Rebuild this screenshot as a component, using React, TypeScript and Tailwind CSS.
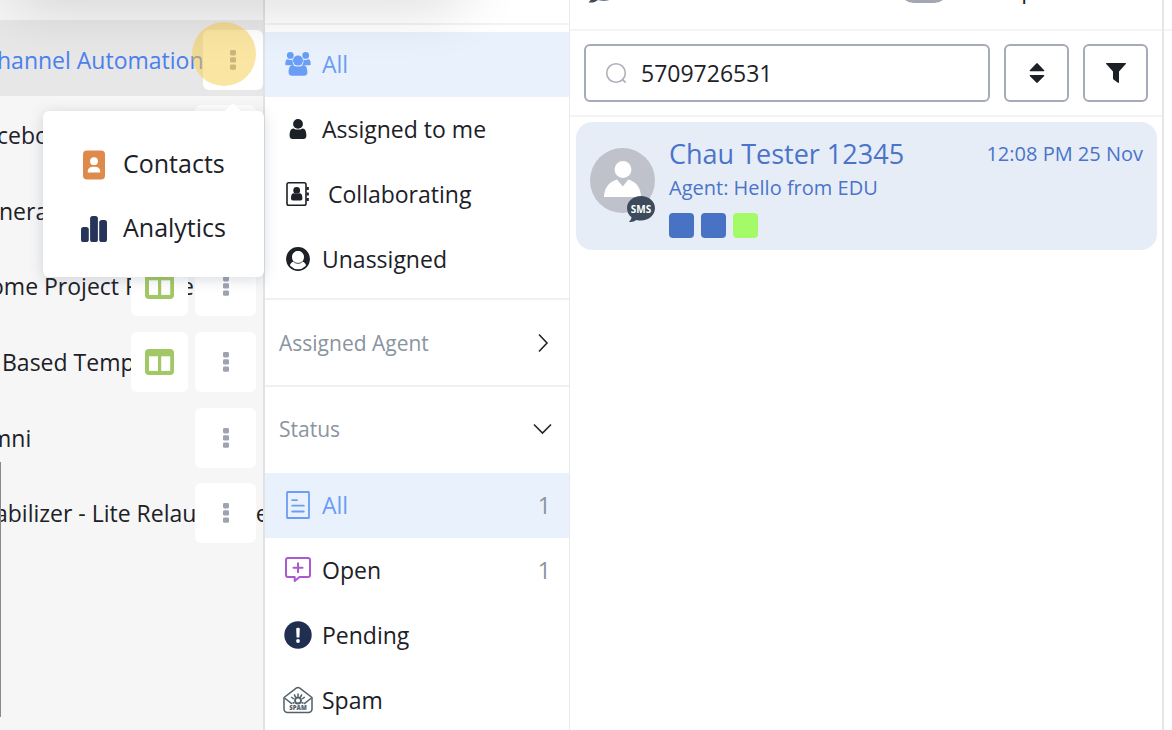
import type { ReactNode } from 'react';

type Channel = { name: string; indent: string; board?: boolean; active?: boolean };

const channels: Channel[] = [
  { name: 'hannel Automation', indent: '-ml-[3px]', active: true },
  { name: 'cebook', indent: '-ml-[3px]' },
  { name: 'neral', indent: '-ml-px' },
  { name: 'ome Project Phone', indent: '-ml-[10px]', board: true },
  { name: 'Based Template', indent: 'ml-[2px]', board: true },
  { name: 'mni', indent: '-ml-[10px]' },
  { name: 'abilizer - Lite Relaunch Re', indent: '-ml-[5px]' },
];

function KebabIcon() {
  return (
    <svg className="w-[6px] h-5" viewBox="0 0 6 20" fill="currentColor">
      <rect width="6" height="5.4" rx="1.4" />
      <rect y="7.2" width="6" height="5.4" rx="1.4" />
      <rect y="14.4" width="6" height="5.4" rx="1.4" />
    </svg>
  );
}

function BoardIcon() {
  return (
    <svg className="w-[29px] h-[26px]" viewBox="0 0 29 26">
      <rect width="29" height="26" rx="4" fill="#a2c765" />
      <rect x="4" y="7.3" width="9" height="14.6" fill="#fff" />
      <rect x="16.2" y="7.3" width="9" height="14.6" fill="#fff" />
    </svg>
  );
}

function ContactsIcon() {
  return (
    <svg className="w-[26px] h-[30px]" viewBox="0 0 26 30">
      <rect x="2" y="0.5" width="22" height="29" rx="4" fill="#dd8a4a" />
      <circle cx="13" cy="11.2" r="3.9" fill="#fff" />
      <path d="M6.8 22.4v-1.2c0-3 2.6-4.4 6.2-4.4s6.2 1.4 6.2 4.4v1.2z" fill="#fff" />
    </svg>
  );
}

function AnalyticsIcon() {
  return (
    <svg className="w-[26px] h-[26px]" viewBox="0 0 26 26" fill="#26345a">
      <rect x="0" y="11" width="7.8" height="15" rx="2.6" />
      <rect x="9.1" y="0" width="7.8" height="26" rx="2.6" />
      <rect x="18.2" y="4" width="7.8" height="22" rx="2.6" />
    </svg>
  );
}

function UsersIcon() {
  return (
    <svg className="w-[26px] h-6" viewBox="0 0 26 24" fill="currentColor">
      <circle cx="5.3" cy="3.4" r="3.4" />
      <circle cx="20.7" cy="3.4" r="3.4" />
      <path d="M0.300 12.500c0-3.500.9-5.200 2.300-5.200.8.500 1.700.8 2.700.8.900 0 1.700-.2 2.400-.6-.5 2.200 0 4.200 1.200 5.700H2.800C1 13.200.3 13.300.3 12.500z" />
      <path d="M25.700 12.500c0-3.500-.9-5.200-2.300-5.200-.8.500-1.700.8-2.700.8-.9 0-1.700-.2-2.400-.6.5 2.200 0 4.200-1.200 5.700h6.100c1.800 0 2.500.1 2.500-.7z" />
      <circle cx="13" cy="8.6" r="5" />
      <path d="M3.600 20.500c0-4.400 1.200-7.400 4.400-7.400 1.300 1.200 3 1.500 5 1.500s3.700-.3 5-1.500c3.200 0 4.400 3 4.400 7.400 0 2.200-1.500 3.300-3.400 3.300H7c-1.900 0-3.400-1.100-3.400-3.300z" />
    </svg>
  );
}

function UserIcon() {
  return (
    <svg className="w-[26px] h-5" viewBox="0 0 26 20" fill="currentColor">
      <circle cx="13" cy="4.9" r="4.9" />
      <path d="M4.600 16.700c0-4.100 1-7.300 4-7.300 1.200 1 2.700 1.200 4.400 1.200s3.200-.2 4.400-1.200c3 0 4 3.200 4 7.300 0 2-1.300 3.300-2.900 3.300h-11c-1.600 0-2.900-1.300-2.900-3.300z" />
    </svg>
  );
}

function AddressBookIcon() {
  return (
    <svg className="w-[26px] h-6" viewBox="0 0 26 24" fill="currentColor">
      <rect x="2" y="0.8" width="19" height="22.4" rx="1.8" fill="none" stroke="currentColor" strokeWidth="1.6" />
      <circle cx="11.7" cy="8.4" r="3.4" />
      <path d="M6 16.200c0-2.900.8-4.900 2.900-4.900.8.500 1.800.7 2.800.7s2-.2 2.800-.7c2.100 0 2.900 2 2.900 4.900 0 1.300-.8 2.300-1.900 2.300H7.900c-1.100 0-1.900-1-1.900-2.300z" />
      <path d="M21.500 5h2.300v3h-2.300zM21.500 10.500h2.300v3h-2.300zM21.500 16h2.300v3h-2.300z" />
    </svg>
  );
}

function UserCircleIcon() {
  return (
    <svg className="w-[26px] h-6" viewBox="0 0 26 24">
      <circle cx="13" cy="12" r="11.1" fill="#fff" stroke="currentColor" strokeWidth="1.6" />
      <path
        d="M13 .9A11.100 11.100 0 0 0 4.600 19.300c.8-3 2.200-4.300 4.300-4.500C7.600 13.300 7 11.700 7 9.900 7 6.500 9.700 4 13 4s6 2.500 6 5.900c0 1.800-.6 3.400-1.900 4.900 2.100.2 3.500 1.500 4.300 4.500A11.100 11.100 0 0 0 13 .9z"
        fill="currentColor"
      />
      <path d="M8.900 14.800a6 6 0 0 0 8.200 0" fill="none" stroke="currentColor" strokeWidth=".8" />
    </svg>
  );
}

function DocumentIcon() {
  return (
    <svg className="w-[26px] h-7" viewBox="0 0 26 28" fill="none" stroke="#6a9df5" strokeWidth="1.8">
      <rect x="2" y="1" width="22" height="26" rx="0.6" />
      <path d="M7.200 9.200H12M7.200 14.700h11.600M7.200 20.500h11.600" strokeLinecap="round" />
    </svg>
  );
}

function OpenIcon() {
  return (
    <svg className="w-[26px] h-[26px]" viewBox="0 0 26 26" fill="none" stroke="#ab58d4" strokeWidth="2">
      <path d="M3 1h20a2 2 0 0 1 2 2v15a2 2 0 0 1-2 2h-8.500L9.700 24v-4H3a2 2 0 0 1-2-2V3a2 2 0 0 1 2-2z" strokeLinejoin="round" />
      <path d="M13 6.200v9M8.500 10.700h9" strokeLinecap="round" />
    </svg>
  );
}

function PendingIcon() {
  return (
    <svg className="w-7 h-7" viewBox="0 0 28 28">
      <circle cx="14" cy="14" r="13.7" fill="#202e50" />
      <path d="M12.200 8q0-1.300 1.800-1.300T15.800 8l-.4 8.500h-2.800z" fill="#fff" />
      <circle cx="14" cy="20" r="1.9" fill="#fff" />
    </svg>
  );
}

function SpamIcon() {
  return (
    <svg className="w-[30px] h-7" viewBox="0 0 30 28" fill="none" stroke="#52616a" strokeWidth="1.500">
      <path d="M1 11.500 13.200 2.200c1.200-.9 2.400-.9 3.600 0L29 11.500V23a3.500 3.500 0 0 1-3.500 3.500h-21A3.500 3.500 0 0 1 1 23z" strokeLinejoin="round" />
      <path d="m1.500 12 7.500 5.800M28.500 12 21 17.800" />
      <circle cx="15" cy="14.5" r="3" strokeWidth="1.8" />
      <path d="M15 10.800V7.500M12.600 11.400l-1.400-3M17.400 11.400l1.400-3M10.900 13l-2.700-2M19.100 13l2.700-2M11.500 16.500l-2 .8M18.500 16.500l2 .8" />
      <text x="15" y="24.300" textAnchor="middle" fontSize="6" fontWeight="800" fill="#52616a" stroke="none" fontFamily="Open Sans, sans-serif">
        SPAM
      </text>
    </svg>
  );
}

function SmsBubble({ className, label }: { className: string; label?: string }) {
  return (
    <svg className={className} viewBox="0 0 28 27">
      <path d="M14 0C6.300 0 0 5.300 0 12c0 3.900 1.700 7 4.500 9.300-.1 1.700-1 3.300-2.600 4.500 2.700.6 5.300-.2 7.500-1.800 1.400.4 3 .6 4.600.6 7.700 0 14-5.700 14-12.600S21.700 0 14 0z" fill="#3d4a5b" />
      {label && (
        <text x="14" y="16.500" textAnchor="middle" fontSize="10" fontWeight="700" fill="#fff" fontFamily="Open Sans, sans-serif">
          {label}
        </text>
      )}
    </svg>
  );
}

function Avatar() {
  return (
    <div className="relative w-[65px] h-[65px] shrink-0">
      <svg className="w-full h-full" viewBox="0 0 65 65">
        <circle cx="32.5" cy="32.5" r="32.5" fill="#bfc2ca" />
        <circle cx="33" cy="21.5" r="8.4" fill="#fff" />
        <path d="M14 49c.3-8.600 4-14.700 13-17.600l5.800 7.200 5.600-7.200c9 2.900 12.400 9 12.700 17.600z" fill="#fff" />
      </svg>
      <SmsBubble className="absolute left-[37px] top-12 w-7 h-[27px]" label="SMS" />
    </div>
  );
}

function ChannelMenu() {
  return (
    <div className="absolute top-[91px] -right-px z-20 w-[221px] rounded-md bg-white pl-[38px] pt-[22px] pb-4 text-[25px] shadow-[0_2px_14px_rgba(70,80,110,0.22)]">
      <svg className="absolute -top-2 right-[22px] w-[18px] h-[9px]" viewBox="0 0 18 9" fill="#fff">
        <path d="M0 9 7.800 1q1.200-1 2.400 0L18 9z" />
      </svg>
      <button type="button" className="flex w-full items-center gap-4 h-16">
        <ContactsIcon />
        <span className="pb-1">Contacts</span>
      </button>
      <button type="button" className="flex w-full items-center gap-4 h-16">
        <AnalyticsIcon />
        <span className="pb-1">Analytics</span>
      </button>
    </div>
  );
}

function Sidebar() {
  return (
    <aside className="relative w-[265px] shrink-0 border-r-2 border-[#e2e2e4] bg-[#f6f6f6] pt-5">
      <div className="absolute left-0 top-[462px] z-10 w-px h-[255px] bg-[#8a8a8a]" />
      <ul className="grid grid-cols-1 auto-rows-fr h-[529px]">
        {channels.map((c) => (
          <li key={c.name} className={c.active ? 'relative bg-[#e7e7e7]' : 'relative'}>
            <div className="flex h-full items-center overflow-hidden pt-1 whitespace-nowrap">
              <a href="#" className={c.active ? `${c.indent} text-[#4a80ee]` : c.indent}>
                {c.name}
              </a>
            </div>
            <div className={c.active ? 'absolute inset-y-0 right-0 flex items-center gap-[7px] pt-1' : 'absolute inset-y-0 right-[7px] flex items-center gap-[7px] pt-1'}>
              {c.board && (
                <button type="button" aria-label="Board" className="flex items-center justify-center w-[57px] h-[60px] rounded-md bg-white">
                  <BoardIcon />
                </button>
              )}
              <button
                type="button"
                aria-label="More"
                className={c.active ? 'flex items-center justify-center w-[60px] h-[60px] rounded-md bg-white text-[#9ea3b0]' : 'flex items-center justify-center w-[61px] h-[60px] rounded-md bg-white text-[#9ea3b0]'}
              >
                <KebabIcon />
              </button>
            </div>
            {c.active && (
              <>
                <span className="absolute top-[2px] right-[7px] w-16 h-16 rounded-full bg-[#f8cc46]/50" />
                <ChannelMenu />
              </>
            )}
          </li>
        ))}
      </ul>
    </aside>
  );
}

interface FilterRowProps {
  icon: ReactNode;
  label: string;
  count?: number;
  active?: boolean;
}

function FilterRow({ icon, label, count, active }: FilterRowProps) {
  return (
    <button
      type="button"
      className={active ? 'flex w-full items-center h-[65px] pl-4 pr-[18px] bg-[#e9f2fc] text-[#6a9df5]' : 'flex w-full items-center h-[65px] pl-4 pr-[18px]'}
    >
      <span className="flex w-[34px] justify-center pb-[2px]">{icon}</span>
      <span className={label === 'Collaborating' ? 'ml-[13px] pb-[2px]' : 'ml-[7px] pb-[2px]'}>{label}</span>
      {count !== undefined && <span className="ml-auto pb-[2px] text-[#8a949e]">{count}</span>}
    </button>
  );
}

function Filters() {
  return (
    <nav className="w-[305px] shrink-0 border-r border-[#e9eaee] bg-white">
      <div className="h-[25px] mb-[7px] border-b-2 border-[#f3f3f4]" />
      <FilterRow icon={<UsersIcon />} label="All" active />
      <FilterRow icon={<UserIcon />} label="Assigned to me" />
      <FilterRow icon={<AddressBookIcon />} label="Collaborating" />
      <FilterRow icon={<UserCircleIcon />} label="Unassigned" />
      <button type="button" className="flex w-full items-center justify-between h-[87px] mt-[6px] pl-[14px] pr-5 border-t-2 border-[#eef0f6] text-[21px] text-[#8a949e]">
        Assigned Agent
        <svg className="w-3 h-5" viewBox="0 0 12 20" fill="none" stroke="#22262c" strokeWidth="1.600">
          <path d="m2 1.500 8 8.500-8 8.500" />
        </svg>
      </button>
      <button type="button" className="flex w-full items-center justify-between h-[88px] pl-[14px] pr-[17px] pb-[2px] border-t-2 border-[#eef0f6] text-[21px] text-[#8a949e]">
        Status
        <svg className="w-[19px] h-3" viewBox="0 0 19 12" fill="none" stroke="#22262c" strokeWidth="1.600">
          <path d="m1 1.500 8.500 8.500L18 1.500" />
        </svg>
      </button>
      <FilterRow icon={<DocumentIcon />} label="All" count={1} active />
      <FilterRow icon={<OpenIcon />} label="Open" count={1} />
      <FilterRow icon={<PendingIcon />} label="Pending" />
      <FilterRow icon={<SpamIcon />} label="Spam" />
    </nav>
  );
}

function Conversations() {
  return (
    <main className="flex-1 min-w-0 border-r-2 border-[#e6e6e9] bg-white">
      <div className="h-[31px] overflow-hidden border-b-2 border-[#f4f4f5]">
        <div className="-mt-[27px] flex h-8 items-start pl-4">
          <SmsBubble className="-mt-1 w-9 h-[35px]" />
          <div className="ml-auto flex pr-[88px]">
            <span className="mr-5 mt-[3px] w-12 h-[27px] rounded-full bg-[#a3a7b5]" />
            <span className="leading-8">Unreplied</span>
          </div>
        </div>
      </div>
      <div className="flex gap-[14px] px-[14px] py-[13px] border-b-2 border-[#f4f4f5]">
        <label className="flex flex-1 min-w-0 items-center h-[58px] gap-[14px] rounded-md border-2 border-[#a6abba] pl-[19px] pr-4">
          <svg className="w-[22px] h-[22px] shrink-0" viewBox="0 0 22 22" fill="none" stroke="#adb1b9" strokeWidth="1.600">
            <circle cx="11" cy="11" r="9.3" />
            <path d="m17.600 17.600 3 3" />
          </svg>
          <input type="text" aria-label="Search" defaultValue="5709726531" className="w-full min-w-0 bg-transparent outline-none" />
        </label>
        <button type="button" aria-label="Sort" className="flex items-center justify-center w-[65px] h-[58px] shrink-0 rounded-md border-2 border-[#a6abba]">
          <svg className="w-4 h-5" viewBox="0 0 16 20" fill="currentColor">
            <path d="M7.300.4q.7-.6 1.400 0l6.500 6.900q.6 1-.6 1H1.400q-1.200 0-.6-1zM7.300 19.600q.7.600 1.400 0l6.500-6.500q.6-1-.6-1H1.400q-1.200 0-.6 1z" />
          </svg>
        </button>
        <button type="button" aria-label="Filter" className="flex items-center justify-center w-[65px] h-[58px] shrink-0 rounded-md border-2 border-[#a6abba]">
          <svg className="w-5 h-5" viewBox="0 0 20 20" fill="currentColor">
            <path d="M.7 0h18.600c.7 0 .9.600.5 1.100L13 8.500v10.700c0 .7-.6.9-1.100.5L7.500 16.500c-.3-.2-.5-.5-.5-.9V8.500L.2 1.100C-.2.600 0 0 .7 0z" />
          </svg>
        </button>
      </div>
      <article className="flex gap-[14px] h-32 mt-[5px] ml-[6px] mr-[5px] pl-[14px] pr-[14px] rounded-2xl bg-[#e7edf7] text-[#4a74c9]">
        <div className="pt-[26px]">
          <Avatar />
        </div>
        <div className="flex-1 min-w-0 pt-[14px]">
          <div className="flex items-center justify-between">
            <h2 className="text-[27px] leading-9">Chau Tester 12345</h2>
            <time className="text-[20px] leading-9">12:08 PM 25 Nov</time>
          </div>
          <p className="text-[20px] leading-8">Agent: Hello from EDU</p>
          <div className="flex gap-[7px] mt-[9px]">
            <span className="w-[25px] h-[25px] rounded bg-[#4872c4]" />
            <span className="w-[25px] h-[25px] rounded bg-[#4872c4]" />
            <span className="w-[25px] h-[25px] rounded bg-[#a5fa68]" />
          </div>
        </div>
      </article>
    </main>
  );
}

export default function App() {
  return (
    <div className="relative flex h-screen overflow-hidden bg-white text-[23px] leading-8 text-[#1c2127] font-['Open_Sans','Noto_Sans',sans-serif]">
      {/* shadow of the panel above the page */}
      <div className="pointer-events-none absolute -top-10 left-3 z-30 w-[450px] h-10 shadow-[0_0_60px_rgba(0,0,0,0.2)]" />
      <Sidebar />
      <Filters />
      <Conversations />
      <div className="w-2 shrink-0">
        <div className="h-[31px] border-b-2 border-[#f4f4f5]" />
      </div>
    </div>
  );
}
